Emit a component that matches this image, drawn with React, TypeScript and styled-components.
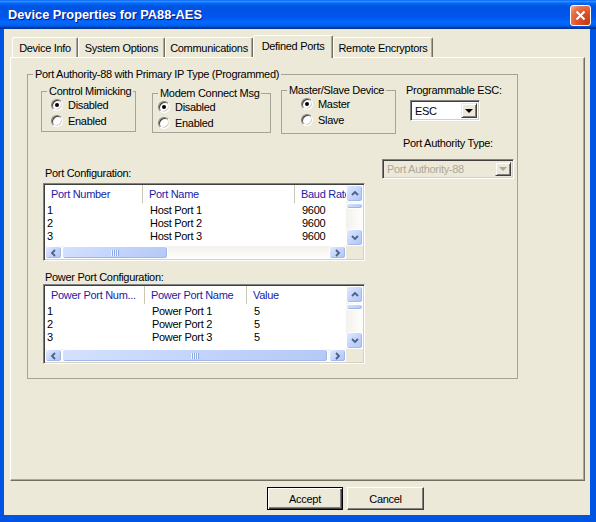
import React from 'react';
import styled, { createGlobalStyle } from 'styled-components';

const GlobalStyle = createGlobalStyle`
  html, body {
    margin: 0;
    padding: 0;
    background: #ece9d8;
  }
  body {
    font-family: "Liberation Sans", Arial, sans-serif;
    font-size: 11px;
    letter-spacing: -0.3px;
    color: #000;
  }
`;

const Window = styled.div`
  width: 596px;
  height: 522px;
  display: flex;
  flex-direction: column;
  overflow: hidden;
`;

const TitleBar = styled.div`
  height: 29px;
  flex-shrink: 0;
  display: flex;
  align-items: center;
  justify-content: space-between;
  padding: 0 5px 0 8px;
  background: linear-gradient(
    to bottom,
    #0058ee 0%,
    #3593ff 4%,
    #288eff 6%,
    #127dff 8%,
    #036ffc 10%,
    #0262ee 14%,
    #0057e5 20%,
    #0054e3 24%,
    #0055eb 56%,
    #005bf5 66%,
    #026afe 76%,
    #0062ef 86%,
    #0052d6 92%,
    #0040ab 94%,
    #003092 100%
  );
`;

const TitleText = styled.span`
  color: #fff;
  font-family: "Liberation Sans", Arial, sans-serif;
  font-weight: bold;
  font-size: 12.8px;
  letter-spacing: 0;
  text-shadow: 1px 1px #0a1883;
`;

const CloseButton = styled.div`
  width: 21px;
  height: 21px;
  box-sizing: border-box;
  margin-top: 1px;
  border: 1px solid #fff;
  border-radius: 3px;
  background: radial-gradient(circle at 85% 85%, #c63d12 0%, #e0532b 45%, #e7774f 75%, #f7b49a 100%);
  display: flex;
  align-items: center;
  justify-content: center;
`;

const Frame = styled.div`
  flex: 1;
  display: flex;
  flex-direction: column;
  background: #ece9d8;
  border-style: solid;
  border-color: #0054e3;
  border-width: 0 6px 7px 4px;
  padding: 6px 5px 0 6px;
`;

const TabStrip = styled.div`
  display: flex;
  align-items: flex-end;
  height: 22px;
  padding-left: 2px;
`;

const Tab = styled.div<{ $w: number; $active?: boolean }>`
  position: relative;
  z-index: ${(p) => (p.$active ? 1 : 0)};
  width: ${(p) => p.$w}px;
  height: ${(p) => (p.$active ? 23 : 20)}px;
  margin-bottom: ${(p) => (p.$active ? -1 : 0)}px;
  padding-bottom: ${(p) => (p.$active ? 3 : 0)}px;
  box-sizing: border-box;
  display: flex;
  align-items: center;
  justify-content: center;
  background: #ece9d8;
  border-top: 1px solid #fff;
  border-left: 1px solid #fff;
  border-right: 1px solid #716f64;
  border-radius: 2px 2px 0 0;
  box-shadow: inset -1px 0 0 #aca899;
  white-space: nowrap;
`;

const TabPanel = styled.div`
  height: 424px;
  box-sizing: border-box;
  border: 1px solid;
  border-color: #fff #716f64 #716f64 #fff;
  box-shadow: inset -1px -1px 0 #aca899;
  padding: 10px 0 0 16px;
`;

const GroupBox = styled.fieldset<{ $w: number; $h?: number; $top?: number }>`
  margin: ${(p) => p.$top ?? 0}px 0 0 0;
  padding: 0;
  width: ${(p) => p.$w}px;
  height: ${(p) => (p.$h ? `${p.$h}px` : 'auto')};
  box-sizing: border-box;
  border: 1px solid #a5a497;
  min-inline-size: 0;
  flex-shrink: 0;
`;

const Legend = styled.legend<{ $lh?: number }>`
  padding: 0 2px;
  margin-left: 5px;
  line-height: ${(p) => p.$lh ?? 13}px;
  white-space: nowrap;
`;

const TopRow = styled.div`
  display: flex;
  align-items: flex-start;
  margin-top: 4px;
  padding-left: 13px;
`;

const Gap = styled.div<{ $w: number }>`
  width: ${(p) => p.$w}px;
  flex-shrink: 0;
`;

const RadioList = styled.div<{ $inset: number }>`
  display: flex;
  flex-direction: column;
  padding-left: ${(p) => p.$inset}px;
`;

const RadioRow = styled.label`
  display: flex;
  align-items: center;
  gap: 5px;
  height: 16px;
`;

const RadioCircle = styled.span<{ $on?: boolean }>`
  width: 12px;
  height: 12px;
  box-sizing: border-box;
  border-radius: 50%;
  border: 1px solid;
  border-color: #808080 #fff #fff #808080;
  box-shadow: inset 1px 1px 0 #404040, inset -1px -1px 0 #d4d0c8;
  background: #fff;
  display: flex;
  align-items: center;
  justify-content: center;
  flex-shrink: 0;

  &::after {
    content: '';
    width: 4px;
    height: 4px;
    border-radius: 50%;
    background: #000;
    display: ${(p) => (p.$on ? 'block' : 'none')};
  }
`;

const Column = styled.div<{ $top?: number; $left?: number }>`
  display: flex;
  flex-direction: column;
  align-items: flex-start;
  margin-top: ${(p) => p.$top ?? 0}px;
  margin-left: ${(p) => p.$left ?? 0}px;
  flex-shrink: 0;
`;

const Label = styled.div<{ $left?: number; $top?: number }>`
  line-height: 13px;
  margin-left: ${(p) => p.$left ?? 0}px;
  margin-top: ${(p) => p.$top ?? 0}px;
  white-space: nowrap;
`;

const Combo = styled.div<{ $w: number; $h: number; $left?: number; $top?: number; $disabled?: boolean }>`
  width: ${(p) => p.$w}px;
  height: ${(p) => p.$h}px;
  margin-left: ${(p) => p.$left ?? 0}px;
  margin-top: ${(p) => p.$top ?? 0}px;
  box-sizing: border-box;
  border: 1px solid;
  border-color: #808080 #fff #fff #808080;
  box-shadow: inset 1px 1px 0 #404040, inset -1px -1px 0 #d4d0c8;
  padding: 2px;
  display: flex;
  background: ${(p) => (p.$disabled ? '#ece9d8' : '#fff')};
  color: ${(p) => (p.$disabled ? '#aca899' : '#000')};
`;

const ComboText = styled.span`
  flex: 1;
  padding-left: 2px;
  display: flex;
  align-items: center;
  white-space: nowrap;
  overflow: hidden;
`;

const DropButton = styled.span`
  width: 16px;
  height: 100%;
  box-sizing: border-box;
  background: #ece9d8;
  border: 1px solid;
  border-color: #ece9d8 #404040 #404040 #ece9d8;
  box-shadow: inset 1px 1px 0 #fff, inset -1px -1px 0 #808080;
  display: flex;
  align-items: center;
  justify-content: center;
`;

const Arrow = styled.span<{ $disabled?: boolean }>`
  width: 0;
  height: 0;
  border-left: 4px solid transparent;
  border-right: 4px solid transparent;
  border-top: 4px solid ${(p) => (p.$disabled ? '#aca899' : '#000')};
`;

const BottomRow = styled.div`
  display: flex;
  align-items: flex-start;
  padding-left: 15px;
  padding-bottom: 14px;
`;

const ListView = styled.div<{ $h: number }>`
  width: 322px;
  height: ${(p) => p.$h}px;
  box-sizing: border-box;
  border: 1px solid;
  border-color: #808080 #fff #fff #808080;
  box-shadow: inset 1px 1px 0 #404040, inset -1px -1px 0 #d4d0c8;
  padding: 1px;
  background: #fff;
  display: grid;
  grid-template-columns: 1fr 17px;
  grid-template-rows: 1fr 13px;
`;

const ListContent = styled.div`
  overflow: hidden;
  min-width: 0;
`;

const ListHeader = styled.div<{ $cols: string }>`
  display: grid;
  grid-template-columns: ${(p) => p.$cols};
  height: 18px;
  margin-bottom: 1px;
`;

const HeaderCell = styled.div`
  color: #1b1ba6;
  padding-left: 6px;
  line-height: 18px;
  white-space: nowrap;
  overflow: hidden;
  border-right: 1px solid #c9c7ba;
  box-shadow: inset -1px 0 0 #fff;
`;

const ListRow = styled.div<{ $cols: string }>`
  display: grid;
  grid-template-columns: ${(p) => p.$cols};
  height: 13px;
  line-height: 13px;
`;

const Cell = styled.div<{ $first?: boolean }>`
  padding-left: ${(p) => (p.$first ? 2 : 7)}px;
  white-space: nowrap;
  overflow: hidden;
`;

const VScroll = styled.div`
  display: flex;
  flex-direction: column;
  background: linear-gradient(to right, #f3f1ec, #fefefb);
`;

const HScroll = styled.div`
  display: flex;
  background: linear-gradient(to bottom, #f3f1ec, #fefefb);
`;

const ScrollButton = styled.div<{ $w: number; $h: number }>`
  width: ${(p) => p.$w}px;
  height: ${(p) => p.$h}px;
  flex-shrink: 0;
  box-sizing: border-box;
  border: 1px solid #fff;
  border-radius: 3px;
  background: linear-gradient(135deg, #e0e9fe 0%, #c6d6fc 45%, #b0c5f6 100%);
  box-shadow: inset -1px -1px 0 #a2b8ed;
  display: flex;
  align-items: center;
  justify-content: center;
`;

const Thumb = styled.div<{ $w?: number; $h?: number; $mt?: number }>`
  width: ${(p) => (p.$w ? `${p.$w}px` : 'auto')};
  height: ${(p) => (p.$h ? `${p.$h}px` : 'auto')};
  margin-top: ${(p) => p.$mt ?? 0}px;
  flex-shrink: 0;
  box-sizing: border-box;
  border: 1px solid #fff;
  border-radius: 3px;
  background: linear-gradient(135deg, #d4e1fd 0%, #c3d4fc 50%, #b4c9f6 100%);
  box-shadow: inset -1px -1px 0 #9fb6ea;
  display: flex;
  align-items: center;
  justify-content: center;
`;

const Grip = styled.span`
  width: 8px;
  height: 6px;
  background: repeating-linear-gradient(90deg, #eef3fe 0 1px, #8eaaea 1px 2px);
`;

const Track = styled.div`
  flex: 1;
`;

const Corner = styled.div`
  background: #ece9d8;
`;

const ButtonRow = styled.div`
  display: flex;
  gap: 4px;
  margin-top: 6px;
  padding-left: 257px;
`;

const DialogButton = styled.div<{ $w: number; $default?: boolean }>`
  width: ${(p) => p.$w}px;
  height: 23px;
  box-sizing: border-box;
  background: #ece9d8;
  display: flex;
  align-items: center;
  justify-content: center;
  border: 1px solid;
  border-color: ${(p) => (p.$default ? '#000' : '#fff #404040 #404040 #fff')};
  box-shadow: ${(p) =>
    p.$default
      ? 'inset 1px 1px 0 #fff, inset -1px -1px 0 #404040, inset -2px -2px 0 #808080'
      : 'inset -1px -1px 0 #808080'};
`;

type Dir = 'up' | 'down' | 'left' | 'right';

const chevrons: Record<Dir, string> = {
  up: '1,5 4,2 7,5',
  down: '1,2 4,5 7,2',
  left: '5,1 2,4 5,7',
  right: '2,1 5,4 2,7',
};

function Chevron({ dir }: { dir: Dir }) {
  return (
    <svg width="8" height="8" viewBox="0 0 8 8">
      <polyline points={chevrons[dir]} fill="none" stroke="#4d6185" strokeWidth="1.8" />
    </svg>
  );
}

interface ListProps {
  height: number;
  cols: string;
  headers: string[];
  rows: string[][];
  thumb: number;
}

function PortList({ height, cols, headers, rows, thumb }: ListProps) {
  return (
    <ListView $h={height}>
      <ListContent>
        <ListHeader $cols={cols}>
          {headers.map((h) => (
            <HeaderCell key={h}>{h}</HeaderCell>
          ))}
        </ListHeader>
        {rows.map((r) => (
          <ListRow key={r[0]} $cols={cols}>
            {r.map((c, i) => (
              <Cell key={i} $first={i === 0}>
                {c}
              </Cell>
            ))}
          </ListRow>
        ))}
      </ListContent>
      <VScroll>
        <ScrollButton $w={17} $h={17}>
          <Chevron dir="up" />
        </ScrollButton>
        <Thumb $h={6} $mt={1} />
        <Track />
        <ScrollButton $w={17} $h={17}>
          <Chevron dir="down" />
        </ScrollButton>
      </VScroll>
      <HScroll>
        <ScrollButton $w={17} $h={13}>
          <Chevron dir="left" />
        </ScrollButton>
        <Thumb $w={thumb}>
          <Grip />
        </Thumb>
        <Track />
        <ScrollButton $w={17} $h={13}>
          <Chevron dir="right" />
        </ScrollButton>
      </HScroll>
      <Corner />
    </ListView>
  );
}

function Radio({ label, on }: { label: string; on?: boolean }) {
  return (
    <RadioRow>
      <RadioCircle $on={on} />
      {label}
    </RadioRow>
  );
}

const tabs = [
  { label: 'Device Info', w: 66 },
  { label: 'System Options', w: 87 },
  { label: 'Communications', w: 88 },
  { label: 'Defined Ports', w: 80, active: true },
  { label: 'Remote Encryptors', w: 100 },
];

export default function App() {
  return (
    <Window>
      <GlobalStyle />
      <TitleBar>
        <TitleText>Device Properties for PA88-AES</TitleText>
        <CloseButton>
          <svg width="11" height="11" viewBox="0 0 11 11">
            <path d="M1.5 1.5 L9.5 9.5 M9.5 1.5 L1.5 9.5" stroke="#fff" strokeWidth="2" />
          </svg>
        </CloseButton>
      </TitleBar>
      <Frame>
        <TabStrip>
          {tabs.map((t) => (
            <Tab key={t.label} $w={t.w} $active={t.active}>
              {t.label}
            </Tab>
          ))}
        </TabStrip>
        <TabPanel>
          <GroupBox $w={491}>
            <Legend>Port Authority-88 with Primary IP Type (Programmed)</Legend>
            <TopRow>
              <GroupBox $w={95} $h={47}>
                <Legend $lh={12}>Control Mimicking</Legend>
                <RadioList $inset={9}>
                  <Radio label="Disabled" on />
                  <Radio label="Enabled" />
                </RadioList>
              </GroupBox>
              <Gap $w={16} />
              <GroupBox $w={119} $h={46} $top={2}>
                <Legend $lh={12}>Modem Connect Msg</Legend>
                <RadioList $inset={5}>
                  <Radio label="Disabled" on />
                  <Radio label="Enabled" />
                </RadioList>
              </GroupBox>
              <Gap $w={10} />
              <GroupBox $w={115} $h={50} $top={-1}>
                <Legend $lh={12}>Master/Slave Device</Legend>
                <RadioList $inset={19}>
                  <Radio label="Master" on />
                  <Radio label="Slave" />
                </RadioList>
              </GroupBox>
              <Column $left={10} $top={-1}>
                <Label>Programmable ESC:</Label>
                <Combo $w={70} $h={21} $left={4} $top={3}>
                  <ComboText>ESC</ComboText>
                  <DropButton>
                    <Arrow />
                  </DropButton>
                </Combo>
              </Column>
            </TopRow>
            <BottomRow>
              <Column $top={33}>
                <Label $left={2}>Port Configuration:</Label>
                <Column $top={3}>
                  <PortList
                    height={78}
                    cols="98px 152px 110px"
                    headers={['Port Number', 'Port Name', 'Baud Rate']}
                    rows={[
                      ['1', 'Host Port 1', '9600'],
                      ['2', 'Host Port 2', '9600'],
                      ['3', 'Host Port 3', '9600'],
                    ]}
                    thumb={106}
                  />
                </Column>
                <Label $left={2} $top={10}>
                  Power Port Configuration:
                </Label>
                <PortList
                  height={80}
                  cols="100px 102px 100px"
                  headers={['Power Port Num...', 'Power Port Name', 'Value']}
                  rows={[
                    ['1', 'Power Port 1', '5'],
                    ['2', 'Power Port 2', '5'],
                    ['3', 'Power Port 3', '5'],
                  ]}
                  thumb={266}
                />
              </Column>
              <Column $left={17} $top={3}>
                <Label $left={21}>Port Authority Type:</Label>
                <Combo $w={132} $h={20} $top={9} $disabled>
                  <ComboText>Port Authority-88</ComboText>
                  <DropButton>
                    <Arrow $disabled />
                  </DropButton>
                </Combo>
              </Column>
            </BottomRow>
          </GroupBox>
        </TabPanel>
        <ButtonRow>
          <DialogButton $w={76} $default>
            Accept
          </DialogButton>
          <DialogButton $w={77}>Cancel</DialogButton>
        </ButtonRow>
      </Frame>
    </Window>
  );
}
